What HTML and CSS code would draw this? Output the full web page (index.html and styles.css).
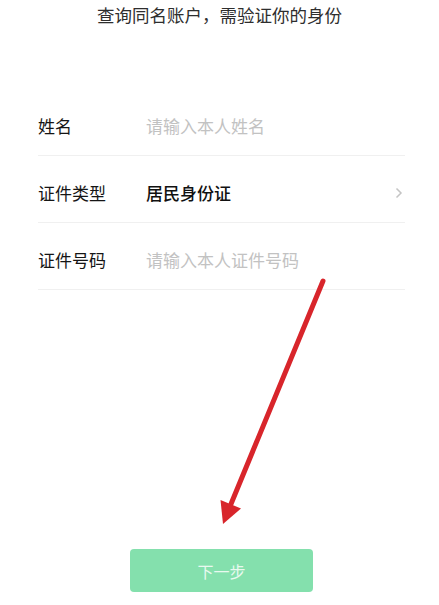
FILE: index.html
```html
<!DOCTYPE html>
<html lang="zh-CN">
<head>
    <meta charset="UTF-8">
    <meta name="viewport" content="width=device-width, initial-scale=1.0">
    <title>身份验证</title>
    <link rel="stylesheet" href="styles.css">
</head>
<body>
    <div class="page">
        <p class="tip">查询同名账户，需验证你的身份</p>

        <div class="form">
            <label class="row">
                <span class="label">姓名</span>
                <input class="field" type="text" placeholder="请输入本人姓名">
            </label>
            <div class="row">
                <span class="label">证件类型</span>
                <span class="value">居民身份证</span>
                <svg class="chevron" width="8" height="12" viewBox="0 0 8 12">
                    <path d="M1.5 1.5 L6 6 L1.5 10.5" fill="none" stroke="#c4c4c4" stroke-width="1.5"/>
                </svg>
            </div>
            <label class="row">
                <span class="label">证件号码</span>
                <input class="field" type="text" placeholder="请输入本人证件号码">
            </label>
        </div>

        <div class="actions">
            <button class="next" disabled>下一步</button>
        </div>

        <svg class="arrow" width="439" height="605" viewBox="0 0 439 605">
            <line x1="323" y1="281" x2="231" y2="504" stroke="#d8252b" stroke-width="5" stroke-linecap="round"/>
            <polygon points="223,524 220.5,500 241,508.5" fill="#d8252b"/>
        </svg>
    </div>
</body>
</html>
```

FILE: styles.css
```css
body {
    margin: 0;
    background: #fff;
    font-family: "Noto Sans CJK SC", "Noto Sans", sans-serif;
    color: #222;
}

.page {
    position: relative;
    width: 439px;
    height: 605px;
    overflow: hidden;
}

.tip {
    margin: 0;
    padding-top: 3px;
    font-size: 17.5px;
    line-height: 24px;
    text-align: center;
    color: #2e2e2e;
}

.form {
    margin-top: 62px;
    padding: 0 34px 0 38px;
}

.row {
    display: flex;
    align-items: center;
    padding: 25px 0 17px;
    border-bottom: 1px solid #f0f0f0;
    font-size: 17px;
    line-height: 24px;
}

.label {
    width: 108px;
    flex-shrink: 0;
    color: #151515;
}

.field {
    flex: 1;
    min-width: 0;
    border: none;
    outline: none;
    padding: 0;
    font: inherit;
    color: #222;
    background: transparent;
}

.field::placeholder {
    color: #c2c2c2;
}

.value {
    flex: 1;
    color: #111;
    font-weight: 500;
}

.chevron {
    margin-right: 2px;
}

.actions {
    display: flex;
    justify-content: center;
    margin-top: 259px;
    padding-left: 4px;
}

.next {
    width: 183px;
    height: 43px;
    border: none;
    border-radius: 4px;
    background: #84e0ad;
    color: #e8f9ef;
    font-family: inherit;
    font-size: 16px;
}

.arrow {
    position: absolute;
    left: 0;
    top: 0;
    pointer-events: none;
}
```
